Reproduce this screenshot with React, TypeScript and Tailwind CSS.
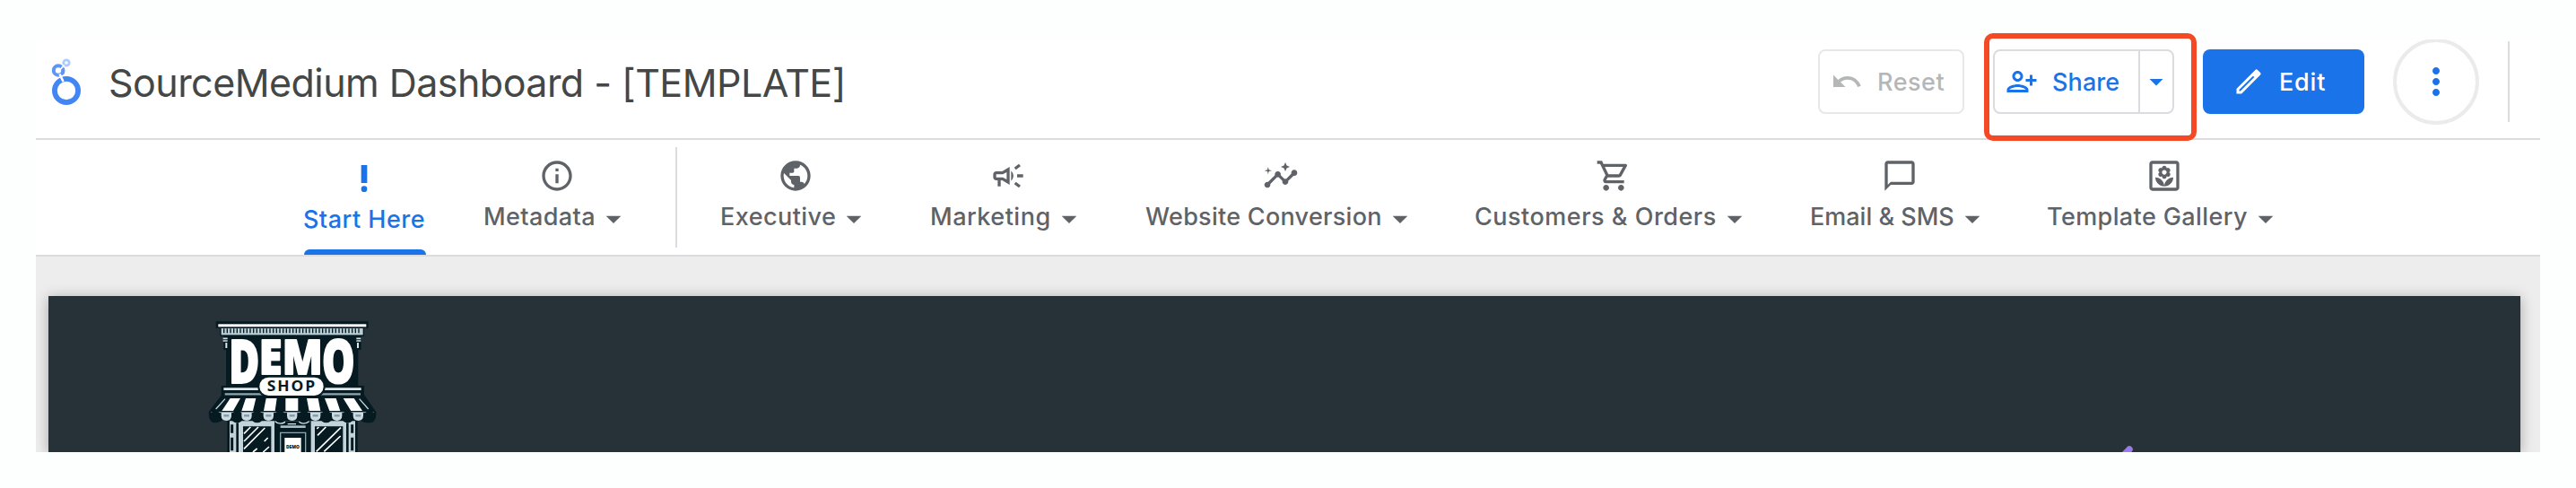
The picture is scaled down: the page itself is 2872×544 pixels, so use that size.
import type { ReactNode } from "react";
import {
  MdArrowDropDown,
  MdChatBubbleOutline,
  MdInfoOutline,
  MdInsights,
  MdMoreVert,
  MdOutlineCampaign,
  MdOutlinePersonAddAlt1,
  MdOutlineShoppingCart,
  MdOutlineYard,
  MdPriorityHigh,
  MdPublic,
  MdUndo,
} from "react-icons/md";

function LookerLogo() {
  return (
    <svg className="h-[54px] w-8 shrink-0" viewBox="58 64 32 54" fill="none">
      <circle cx="74" cy="101" r="13.1" stroke="#4285f4" strokeWidth="5.8" />
      <circle cx="65" cy="78.5" r="5.2" stroke="#5c96f8" strokeWidth="4" />
      <circle cx="74" cy="70" r="3.2" stroke="#aecbfa" strokeWidth="2.8" />
      <path d="M66.5 82.5 70.5 91" stroke="#fff" strokeWidth="2.6" />
      <path d="M66.5 78.5 71.5 72.5" stroke="#fff" strokeWidth="1.8" />
      <path d="M70 76.5c1 2 .9 3.8-.6 5.9" stroke="#5c96f8" strokeWidth="3.6" />
    </svg>
  );
}

function PencilIcon() {
  return (
    <svg className="size-9 shrink-0" viewBox="0 0 24 24" fill="currentColor" fillRule="evenodd">
      <path d="M3 17.25V21h3.75L20.71 7.04a1.2 1.2 0 0 0 0-1.7l-2.05-2.05a1.2 1.2 0 0 0-1.7 0L3 17.25zM5.92 19H5v-.92l10.3-10.3.92.92z" />
    </svg>
  );
}

const NAV: { label: string; icon: ReactNode; box: string; text: string }[] = [
  { label: "Executive", icon: <MdPublic />, box: "w-[170px] ml-[47px]", text: "tracking-[0.45px]" },
  { label: "Marketing", icon: <MdOutlineCampaign />, box: "w-[175px] ml-16", text: "tracking-[0.5px]" },
  { label: "Website Conversion", icon: <MdInsights />, box: "w-[304px] ml-[65px]", text: "tracking-[0.28px]" },
  { label: "Customers & Orders", icon: <MdOutlineShoppingCart />, box: "w-[311px] ml-[63px]", text: "tracking-[0.5px]" },
  { label: "Email & SMS", icon: <MdChatBubbleOutline />, box: "w-[201px] ml-[63px]", text: "tracking-[0px]" },
  { label: "Template Gallery", icon: <MdOutlineYard />, box: "w-[264px] ml-[63px]", text: "tracking-[0.4px]" },
];

function NavItem({ label, icon, box, text }: { label: string; icon: ReactNode; box: string; text: string }) {
  return (
    <div className={`flex shrink-0 flex-col items-center pt-5 text-[#5f6368] ${box}`}>
      <div className="text-[40px]">{icon}</div>
      <div className="mt-[9px] flex h-8 w-full items-center justify-between">
        <span className={`mt-[2px] ml-px text-[27px] leading-8 font-medium whitespace-nowrap ${text}`}>{label}</span>
        <MdArrowDropDown className="mt-[6px] size-10 shrink-0" />
      </div>
    </div>
  );
}

const STRIPES = [
  "M170 342h34l-24 42h-38z",
  "M222 342h34l-10 42h-38z",
  "M290 342h36l-6 42h-38z",
  "M355 342h42v42h-42z",
  "M426 342h38l8 42h-38z",
  "M486 342h38l14 42h-36z",
  "M548 342h36l28 42h-38z",
];

function Storefront() {
  return (
    <svg className="h-[174px] w-[260px] shrink-0" viewBox="0 0 780 522" fontFamily="'Open Sans', 'Noto Sans', sans-serif" fontWeight="800">
      <path d="M122 85H632V107H618V134H608V180H598V300H618V330L658 388C660 412 650 422 630 424Q612 424 606 414H596V522H160V414H146Q132 426 112 422Q98 414 98 388L140 332V300H156V180H148V134H136V107H122Z" fill="#061a21" />
      <rect x="130" y="94" width="495" height="9" fill="#fff" />
      <rect x="140" y="108" width="474" height="22" fill="#b9cdd5" />
      <path d="M147 116H608" stroke="#061a21" strokeWidth="15" strokeDasharray="4 7" />
      <path d="M146 142h15M146 150h15M592 142h15M592 150h15" stroke="#cfe0e6" strokeWidth="5" />
      <path d="M157 156v18M597 156v18" stroke="#dce8ec" strokeWidth="6" />
      <g fill="#fff" stroke="#fff" strokeWidth="5" strokeLinejoin="round">
        <text transform="translate(166 291) scale(.91 1.33)" x="0" y="0" fontSize="150" textLength="112" lengthAdjust="spacingAndGlyphs">D</text>
        <text transform="translate(266 262) scale(.9 1.05)" x="0" y="0" fontSize="150" textLength="86" lengthAdjust="spacingAndGlyphs">E</text>
        <text transform="translate(344 262) scale(.9 1.05)" x="0" y="0" fontSize="150" textLength="150" lengthAdjust="spacingAndGlyphs">M</text>
        <text transform="translate(477 291) scale(.9 1.33)" x="0" y="0" fontSize="150" textLength="122" lengthAdjust="spacingAndGlyphs">O</text>
      </g>
      <path d="M148 311H608" stroke="#dce8ec" strokeWidth="8" />
      <path d="M152 328H606" stroke="#8fa7b1" strokeWidth="7" />
      <rect x="262" y="266" width="226" height="73" rx="36" fill="#061a21" />
      <rect x="268" y="272" width="214" height="61" rx="30" fill="#fff" />
      <text x="293" y="319" fontSize="46" textLength="166" lengthAdjust="spacingAndGlyphs" fill="#061a21" fontWeight="700" letterSpacing="5">SHOP</text>
      {STRIPES.map((d) => <path key={d} d={d} fill="#fff" />)}
      <path d="M153 344 122 378M602 344 632 378" stroke="#c5d6dc" strokeWidth="4" />
      <path d="M106 389H650" stroke="#9fb4bd" strokeWidth="3" />
      <path d="M168 418H588V522H168Z" fill="#c3d3da" />
      <path d="M190 424h8v98h-8zM558 424h8v98h-8z" fill="#061a21" />
      <path d="M318 418H440V522H318Z" fill="#061a21" />
      {[120, 193, 260, 336, 417, 491, 563, 636].map((x) => (
        <circle key={x} cx={x} cy="404" r="20" fill="#061a21" />
      ))}
      {[157, 225, 298, 377, 455, 527, 598].map((x) => (
        <g key={x}>
          <path d={`M${x - 17} 390h34v10q0 17-17 17t-17-17z`} fill="#cbdbe1" />
          <path d={`M${x - 9} 400h18`} stroke="#8299a3" strokeWidth="7" />
        </g>
      ))}
      <path d="M320 419q16 14 34 2M400 421q16 12 34-2M362 428h28" stroke="#dce8ec" strokeWidth="4" fill="none" />
      <path d="M176 430v28M176 473v44M578 430v28M578 473v44" stroke="#061a21" strokeWidth="9" />
      <path d="M213 436h94v86h-94zM453 436h94v86h-94z" fill="#061a21" />
      <path d="M216 460l22-22M216 486l48-48M216 511l70-70M284 486l12-12M246 522l14-12M280 522l20-18M462 466l28-28M458 520l82-80M484 520l55-52M460 444l6-6" stroke="#fff" strokeWidth="5" />
      <path d="M338 437h84" stroke="#a9bec7" strokeWidth="8" />
      <path d="M338 522V457h84v65" stroke="#8fa7b1" strokeWidth="4" fill="none" />
      <rect x="352" y="474" width="55" height="48" fill="#fff" />
      <text x="357" y="509" fontSize="14" textLength="45" lengthAdjust="spacingAndGlyphs" fill="#061a21">DEMO</text>
    </svg>
  );
}

export default function App() {
  return (
    <div className="relative h-[544px] w-[2872px] overflow-hidden bg-[#fdfffe] px-10 pt-11 font-['Inter',sans-serif]">
      <div className="h-[460px] bg-white">
        <header className="flex h-28 items-center overflow-hidden border-b-2 border-[#dadce0] pr-[34px] pb-4 pl-[18px]">
          <LookerLogo />
          <h1 className="mt-[2px] ml-[31px] text-[43px] leading-[48px] tracking-[-0.54px] whitespace-nowrap text-[#444746]">
            SourceMedium Dashboard - [TEMPLATE]
          </h1>
          <div className="ml-auto flex shrink-0 items-center gap-8 text-[27px] leading-9 font-medium">
            <button className="flex h-[72px] w-[163px] items-center gap-4 rounded-lg border-2 border-[#e8e8e9] pl-3 text-[#b5b6b7]">
              <MdUndo className="size-9 shrink-0" />
              <span className="mt-px tracking-[0.5px]">Reset</span>
            </button>
            <div className="flex h-[72px] w-[202px] items-stretch rounded-lg border-2 border-[#dadce0] text-[#1a73e8]">
              <button className="flex flex-1 items-center gap-4 border-r-2 border-[#dadce0] pl-3">
                <MdOutlinePersonAddAlt1 className="size-9 shrink-0" />
                <span className="mt-px tracking-[0.1px]">Share</span>
              </button>
              <button className="flex w-9 items-center">
                <MdArrowDropDown className="size-9" />
              </button>
            </div>
            <button className="flex h-[72px] w-[180px] items-center gap-4 rounded-lg bg-[#1a73e8] pl-[33px] text-white">
              <PencilIcon />
              <span className="mt-px tracking-[0.8px]">Edit</span>
            </button>
            <button className="flex size-24 items-center justify-center rounded-full border-4 border-[#ebebeb] text-[#1a73e8]">
              <MdMoreVert className="size-12" />
            </button>
            <div className="h-[90px] w-[2px] bg-[#dadce0]" />
          </div>
        </header>

        <nav className="flex h-[130px] border-b-2 border-[#dadce0] pl-[299px]">
          <div className="flex w-[136px] shrink-0 flex-col items-center pt-[23px] text-[#1a73e8]">
            <MdPriorityHigh className="mr-[2px] size-10" />
            <span className="mt-[10px] -ml-[2px] text-[27px] leading-8 font-medium tracking-[0.5px] whitespace-nowrap">Start Here</span>
            <div className="mt-auto h-[6px] w-full rounded-t-md bg-[#1a73e8]" />
          </div>
          <NavItem label="Metadata" icon={<MdInfoOutline />} box="w-[166px] ml-[63px]" text="tracking-[0.4px]" />
          <div className="mt-2 ml-[49px] h-28 w-[2px] shrink-0 bg-[#dadce0]" />
          {NAV.map((item) => (
            <NavItem key={item.label} {...item} />
          ))}
        </nav>

        <main className="h-[218px] overflow-hidden bg-[#ededed] pt-11 pr-[22px] pl-[14px]">
          <div className="flex h-[174px] justify-between bg-[#263238] pr-[432px] pl-[146px] shadow-[0_2px_14px_rgba(0,0,0,0.3)]">
            <Storefront />
            <svg className="h-2 w-3 self-end" viewBox="0 0 12 8">
              <path d="M8 5-4 17.5" stroke="#9a7bea" strokeWidth="7.5" strokeLinecap="round" />
            </svg>
          </div>
        </main>
      </div>
      <div className="absolute top-[37px] left-[2212px] h-[120px] w-[237px] rounded-[10px] border-[6px] border-[#f54824]" />
    </div>
  );
}
